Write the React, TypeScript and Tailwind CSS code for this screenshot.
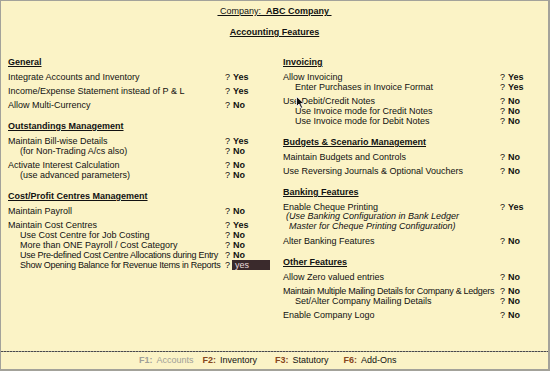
import React from "react";

type Line = { t: string; v?: string; indent?: number; italic?: boolean; sel?: boolean; tight?: boolean };
type Section = { h: string; groups: Line[][] };

const left: Section[] = [
  {
    h: "General",
    groups: [
      [{ t: "Integrate Accounts and Inventory", v: "Yes" }],
      [{ t: "Income/Expense Statement instead of P & L", v: "Yes" }],
      [{ t: "Allow Multi-Currency", v: "No" }],
    ],
  },
  {
    h: "Outstandings Management",
    groups: [
      [
        { t: "Maintain Bill-wise Details", v: "Yes" },
        { t: "(for Non-Trading A/cs also)", v: "No", indent: 12 },
      ],
      [
        { t: "Activate Interest Calculation", v: "No" },
        { t: "(use advanced parameters)", v: "No", indent: 12 },
      ],
    ],
  },
  {
    h: "Cost/Profit Centres Management",
    groups: [
      [{ t: "Maintain Payroll", v: "No" }],
      [
        { t: "Maintain Cost Centres", v: "Yes" },
        { t: "Use Cost Centre for Job Costing", v: "No", indent: 12 },
        { t: "More than ONE Payroll / Cost Category", v: "No", indent: 12 },
        { t: "Use Pre-defined Cost Centre Allocations during Entry", v: "No", indent: 12, tight: true },
        { t: "Show Opening Balance for Revenue Items in Reports", v: "yes", indent: 12, sel: true, tight: true },
      ],
    ],
  },
];

const right: Section[] = [
  {
    h: "Invoicing",
    groups: [
      [
        { t: "Allow Invoicing", v: "Yes" },
        { t: "Enter Purchases in Invoice Format", v: "Yes", indent: 12 },
      ],
      [
        { t: "Use Debit/Credit Notes", v: "No" },
        { t: "Use Invoice mode for Credit Notes", v: "No", indent: 12 },
        { t: "Use Invoice mode for Debit Notes", v: "No", indent: 12 },
      ],
    ],
  },
  {
    h: "Budgets & Scenario Management",
    groups: [
      [{ t: "Maintain Budgets and Controls", v: "No" }],
      [{ t: "Use Reversing Journals & Optional Vouchers", v: "No" }],
    ],
  },
  {
    h: "Banking Features",
    groups: [
      [
        { t: "Enable Cheque Printing", v: "Yes" },
        { t: "(Use Banking Configuration in Bank Ledger", indent: 3, italic: true },
        { t: "Master for Cheque Printing Configuration)", indent: 6, italic: true },
      ],
      [{ t: "Alter Banking Features", v: "No" }],
    ],
  },
  {
    h: "Other Features",
    groups: [
      [{ t: "Allow Zero valued entries", v: "No" }],
      [
        { t: "Maintain Multiple Mailing Details for Company & Ledgers", v: "No", tight: true },
        { t: "Set/Alter Company Mailing Details", v: "No", indent: 12 },
      ],
      [{ t: "Enable Company Logo", v: "No" }],
    ],
  },
];

function Row({ l }: { l: Line }) {
  const cls = [
    "flex-1 min-w-0",
    l.italic ? "italic leading-[9.5px]" : "",
    l.tight ? "tracking-[-0.27px]" : "",
  ].join(" ");
  return (
    <div className="flex h-[10px] leading-[10px] whitespace-nowrap">
      <div className={cls} style={{ paddingLeft: l.indent ?? 0 }}>
        {l.t}
      </div>
      {l.v && (
        <div className="w-[45px] shrink-0 flex">
          <span>?</span>
          {l.sel ? (
            <span className="ml-[2px] w-[40px] h-[10px] bg-[#3a2a2c] text-[#e8dcdc] pl-[3px]">{l.v}</span>
          ) : (
            <span className="ml-[3px] font-bold">{l.v}</span>
          )}
        </div>
      )}
    </div>
  );
}

function Column({ sections }: { sections: Section[] }) {
  return (
    <div className="w-[262px] flex flex-col gap-[10px]">
      {sections.map((s) => (
        <div key={s.h} className="flex flex-col">
          <div className="font-bold underline leading-[12px] h-[12px]">{s.h}</div>
          {s.groups.map((g, i) => (
            <div key={i} className="mt-[4px] flex flex-col">
              {g.map((l) => (
                <Row key={l.t} l={l} />
              ))}
            </div>
          ))}
        </div>
      ))}
    </div>
  );
}

export default function App() {
  return (
    <div
      className="relative w-[550px] h-[371px] bg-[#fbf3c6] border-l border-t border-r-2 border-b-2 border-[#a3a29a] flex flex-col text-[9px] text-[#111]"
      style={{ fontFamily: '"Liberation Sans", Arial, sans-serif' }}
    >
      <div className="pt-[4px] flex flex-col items-center">
        <div className="leading-[12px] h-[12px] underline whitespace-pre">
          {" Company:  "}
          <span className="font-bold">ABC Company </span>
        </div>
        <div className="mt-[9px] leading-[12px] h-[12px] font-bold underline">Accounting Features</div>
      </div>
      <div className="mt-[18px] flex pl-[7px] gap-[13px] flex-1">
        <Column sections={left} />
        <Column sections={right} />
      </div>
      <div className="h-px bg-[repeating-linear-gradient(90deg,#4a4a4a_0_2px,#9a9a96_2px_3px)]" />
      <div className="h-[17px] flex items-center pl-[138px] whitespace-nowrap">
        <span className="text-[#a09f98]">
          <span className="font-bold">F1:</span>
          <span className="ml-[4px]">Accounts</span>
        </span>
        <span className="ml-[9px]">
          <span className="font-bold text-[#86461c]">F2:</span>
          <span className="ml-[4px]">Inventory</span>
        </span>
        <span className="ml-[18px]">
          <span className="font-bold text-[#86461c]">F3:</span>
          <span className="ml-[4px]">Statutory</span>
        </span>
        <span className="ml-[15px]">
          <span className="font-bold text-[#86461c]">F6:</span>
          <span className="ml-[4px]">Add-Ons</span>
        </span>
      </div>
      <svg className="absolute left-[295px] top-[95px]" width="9" height="13" viewBox="0 0 9 13">
        <path d="M0.5 0.5 L0.5 10.5 L3 8 L5 12.3 L6.7 11.5 L4.8 7.5 L8 7.5 Z" fill="#111" stroke="#fff" strokeWidth="0.8" />
      </svg>
    </div>
  );
}
